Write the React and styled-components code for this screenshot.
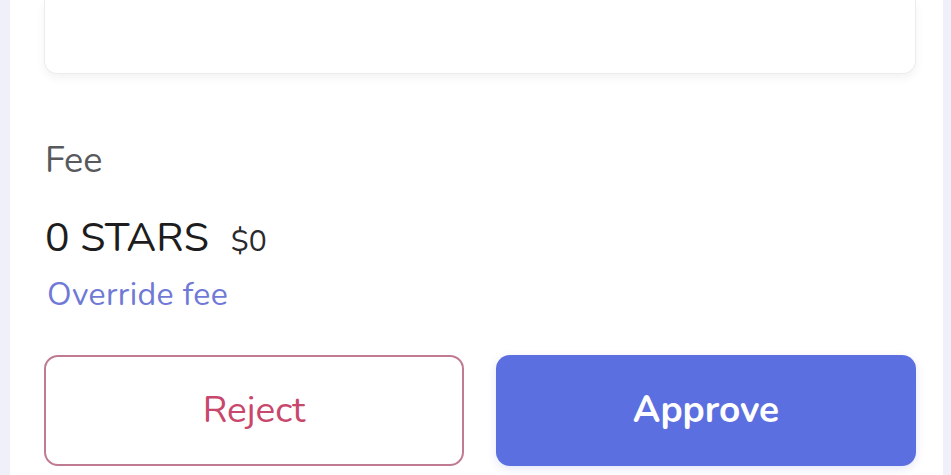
import React from "react";
import styled, { createGlobalStyle } from "styled-components";

const Global = createGlobalStyle`
  html, body { margin: 0; padding: 0; background: #eff0fa; }
  body { font-family: "Nunito", "Lato", "Noto Sans", sans-serif; overflow: hidden; }
`;

const Panel = styled.div`
  margin: 0 8px 0 10px;
  height: 475px;
  background: #ffffff;
  padding: 0 27px 0 34px;
  box-sizing: border-box;
  display: flex;
  flex-direction: column;
`;

const Card = styled.div`
  height: 73px;
  flex: none;
  background: #fff;
  border: 1px solid #ececef;
  border-top: none;
  border-radius: 0 0 13px 13px;
  box-shadow: 0 4px 10px rgba(0, 0, 0, 0.05);
`;

const FeeLabel = styled.div`
  margin-top: 65px;
  font-size: 36px;
  line-height: 1.2;
  color: #58595d;
  padding-left: 1px;
`;

const AmountRow = styled.div`
  margin-top: 31px;
  display: flex;
  align-items: baseline;
  gap: 22px;
  padding-left: 1px;
  line-height: 1.2;
`;

const Amount = styled.span`
  font-size: 41px;
  color: #1d1d20;
`;

const Fiat = styled.span`
  font-size: 30px;
  color: #2a2a2e;
`;

const Override = styled.a`
  margin-top: 14px;
  font-size: 32px;
  line-height: 1.2;
  letter-spacing: 0.4px;
  color: #6f79d6;
  padding-left: 3px;
  cursor: pointer;
`;

const Buttons = styled.div`
  margin-top: 40px;
  display: grid;
  grid-template-columns: 1fr 1fr;
  gap: 32px;
`;

const Button = styled.button`
  height: 111px;
  border-radius: 14px;
  font-family: inherit;
  font-size: 37px;
  font-weight: ${p => (p.$primary ? 700 : 400)};
  color: ${p => (p.$primary ? "#ffffff" : "#c8476c")};
  background: ${p => (p.$primary ? "#5b6fe0" : "#ffffff")};
  border: ${p => (p.$primary ? "none" : "2px solid #c07a92")};
  box-shadow: ${p => (p.$primary ? "0 3px 8px rgba(80, 90, 200, 0.15)" : "none")};
  cursor: pointer;
`;

export default function App() {
  return (
    <>
      <Global />
      <Panel>
        <Card />
        <FeeLabel>Fee</FeeLabel>
        <AmountRow>
          <Amount>0 STARS</Amount>
          <Fiat>$0</Fiat>
        </AmountRow>
        <Override>Override fee</Override>
        <Buttons>
          <Button>Reject</Button>
          <Button $primary>Approve</Button>
        </Buttons>
      </Panel>
    </>
  );
}
